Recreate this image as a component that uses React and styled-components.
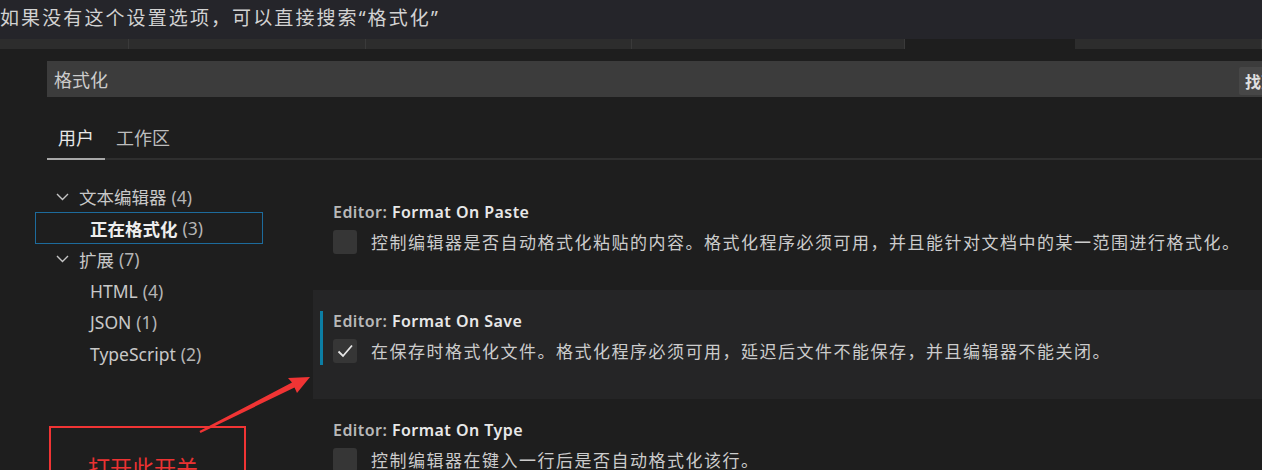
import React from 'react';
import styled, { createGlobalStyle } from 'styled-components';

const GlobalStyle = createGlobalStyle`
  html, body {
    margin: 0;
    padding: 0;
    background: #1e1e1e;
  }
  body {
    font-family: "Noto Sans", "Noto Sans CJK SC", sans-serif;
  }
`;

const Page = styled.div`
  position: relative;
  width: 1262px;
  height: 470px;
  overflow: hidden;
  background: #1e1e1e;
  color: #cccccc;
`;

const Caption = styled.div`
  height: 39px;
  background: #25252a;
  color: #d2d2d2;
  font-size: 19px;
  letter-spacing: 2.1px;
  line-height: 36px;
  white-space: nowrap;
`;

const TabStrip = styled.div`
  display: flex;
  height: 10px;
  background: #2d2d2d;
`;

const StripTab = styled.div`
  width: ${(p) => p.w}px;
  flex: ${(p) => (p.w ? 'none' : '1')};
  background: ${(p) => (p.active ? '#1e1e1e' : '#2d2d2d')};
  border-right: 1px solid ${(p) => (p.active ? '#1e1e1e' : '#3a3a3a')};
  box-sizing: border-box;
`;

const Header = styled.div`
  padding: 12px 0 0 47px;
`;

const SearchBox = styled.div`
  position: relative;
  display: flex;
  align-items: center;
  height: 36px;
  background: #3c3c3c;
  padding-left: 7px;
  font-size: 18px;
  color: #cccccc;
`;

const SearchBadge = styled.span`
  position: absolute;
  left: 1192px;
  top: 6px;
  height: 28px;
  padding: 0 6px;
  display: flex;
  align-items: center;
  background: #474747;
  border-radius: 2px;
  color: #e0e0e0;
  font-size: 16px;
  font-weight: 600;
  white-space: nowrap;
`;

const ScopeTabs = styled.div`
  display: flex;
  height: 63px;
  border-bottom: 2px solid #2f2f2f;
  box-sizing: border-box;
`;

const ScopeTab = styled.div`
  display: flex;
  align-items: center;
  padding: 18px 11px 0;
  margin-bottom: -2px;
  font-size: 18px;
  color: ${(p) => (p.active ? '#e7e7e7' : '#bdbdbd')};
  border-bottom: 2px solid ${(p) => (p.active ? '#a8a8a8' : 'transparent')};
`;

const Body = styled.div`
  display: flex;
`;

const Tree = styled.div`
  width: 228px;
  margin-left: 35px;
  padding-top: 21px;
  flex: none;
`;

const TreeRow = styled.div`
  display: flex;
  align-items: center;
  height: 31.4px;
  box-sizing: border-box;
  padding-left: ${(p) => (p.child ? 54 : 20)}px;
  border: 1px solid ${(p) => (p.focused ? '#1d6b9c' : 'transparent')};
  font-size: 17.5px;
  color: #c8c8c8;
  white-space: nowrap;
`;

const Chevron = styled.svg`
  width: 13px;
  height: 8px;
  margin-right: 10px;
  flex: none;
`;

const Label = styled.span`
  font-weight: ${(p) => (p.bold ? 700 : 400)};
  color: ${(p) => (p.bold ? '#eeeeee' : '#c8c8c8')};
`;

const Count = styled.span`
  margin-left: 5px;
  color: #b4b4b4;
`;

const SettingList = styled.div`
  flex: 1;
  margin-left: 50px;
  padding-top: 21px;
`;

const SettingRow = styled.div`
  height: 109px;
  box-sizing: border-box;
  padding: 21px 0 0 7px;
  background: ${(p) => (p.active ? '#252526' : 'transparent')};
`;

const SettingInner = styled.div`
  border-left: 3px solid ${(p) => (p.active ? '#0c7ea4' : 'transparent')};
  padding-left: 10px;
`;

const Title = styled.div`
  height: 20px;
  line-height: 20px;
  margin-bottom: 5px;
  font-size: 16px;
  font-weight: 600;
  letter-spacing: 0.45px;
  color: #b8b8b8;
  white-space: nowrap;
  b {
    font-weight: 600;
    color: #e8e8e8;
  }
`;

const Line = styled.div`
  display: flex;
  align-items: center;
  height: 29px;
`;

const Checkbox = styled.div`
  width: 24px;
  height: 24px;
  border-radius: 3px;
  background: #363636;
  display: flex;
  align-items: center;
  justify-content: center;
  margin-right: 14px;
  flex: none;
`;

const Description = styled.span`
  font-size: 17px;
  letter-spacing: 1.5px;
  color: #cccccc;
  white-space: nowrap;
`;

const Annotation = styled.div`
  position: absolute;
  left: 49px;
  top: 426px;
  width: 197px;
  height: 80px;
  border: 2px solid #f03434;
  box-sizing: border-box;
`;

const AnnotationText = styled.span`
  position: absolute;
  left: 37px;
  top: 22px;
  font-size: 22px;
  color: #ec3232;
  white-space: nowrap;
`;

const Arrow = styled.svg`
  position: absolute;
  left: 0;
  top: 0;
  width: 1262px;
  height: 470px;
  pointer-events: none;
`;

const tree = [
  { label: '文本编辑器', count: 4, chevron: true },
  { label: '正在格式化', count: 3, child: true, focused: true, bold: true },
  { label: '扩展', count: 7, chevron: true },
  { label: 'HTML', count: 4, child: true },
  { label: 'JSON', count: 1, child: true },
  { label: 'TypeScript', count: 2, child: true },
];

const settings = [
  {
    name: 'Format On Paste',
    text: '控制编辑器是否自动格式化粘贴的内容。格式化程序必须可用，并且能针对文档中的某一范围进行格式化。',
  },
  {
    name: 'Format On Save',
    text: '在保存时格式化文件。格式化程序必须可用，延迟后文件不能保存，并且编辑器不能关闭。',
    checked: true,
    active: true,
  },
  {
    name: 'Format On Type',
    text: '控制编辑器在键入一行后是否自动格式化该行。',
  },
];

export default function App() {
  return (
    <>
      <GlobalStyle />
      <Page>
        <Caption>如果没有这个设置选项，可以直接搜索“格式化”</Caption>
        <TabStrip>
          <StripTab w={129} />
          <StripTab w={237} />
          <StripTab w={266} />
          <StripTab w={273} />
          <StripTab w={170} active />
          <StripTab />
        </TabStrip>
        <Header>
          <SearchBox>
            格式化
            <SearchBadge>找到</SearchBadge>
          </SearchBox>
          <ScopeTabs>
            <ScopeTab active>用户</ScopeTab>
            <ScopeTab>工作区</ScopeTab>
          </ScopeTabs>
        </Header>
        <Body>
          <Tree>
            {tree.map((item) => (
              <TreeRow key={item.label} child={item.child} focused={item.focused}>
                {item.chevron && (
                  <Chevron viewBox="0 0 13 8">
                    <path d="M1 1 L6.5 6.5 L12 1" fill="none" stroke="#c5c5c5" strokeWidth="1.4" />
                  </Chevron>
                )}
                <Label bold={item.bold}>{item.label}</Label>
                <Count>({item.count})</Count>
              </TreeRow>
            ))}
          </Tree>
          <SettingList>
            {settings.map((s) => (
              <SettingRow key={s.name} active={s.active}>
                <SettingInner active={s.active}>
                  <Title>
                    Editor: <b>{s.name}</b>
                  </Title>
                  <Line>
                    <Checkbox>
                      {s.checked && (
                        <svg width="18" height="18" viewBox="0 0 18 18">
                          <path d="M2.5 9.5 L7 14 L16 3.5" fill="none" stroke="#e6e6e6" strokeWidth="1.8" />
                        </svg>
                      )}
                    </Checkbox>
                    <Description>{s.text}</Description>
                  </Line>
                </SettingInner>
              </SettingRow>
            ))}
          </SettingList>
        </Body>
        <Annotation>
          <AnnotationText>打开此开关</AnnotationText>
        </Annotation>
        <Arrow viewBox="0 0 1262 470">
          <polygon
            points="199.5,431 292,382.5 288,378 310,377 297,393 294.5,387.5 200.5,433"
            fill="#f03434"
          />
        </Arrow>
      </Page>
    </>
  );
}
